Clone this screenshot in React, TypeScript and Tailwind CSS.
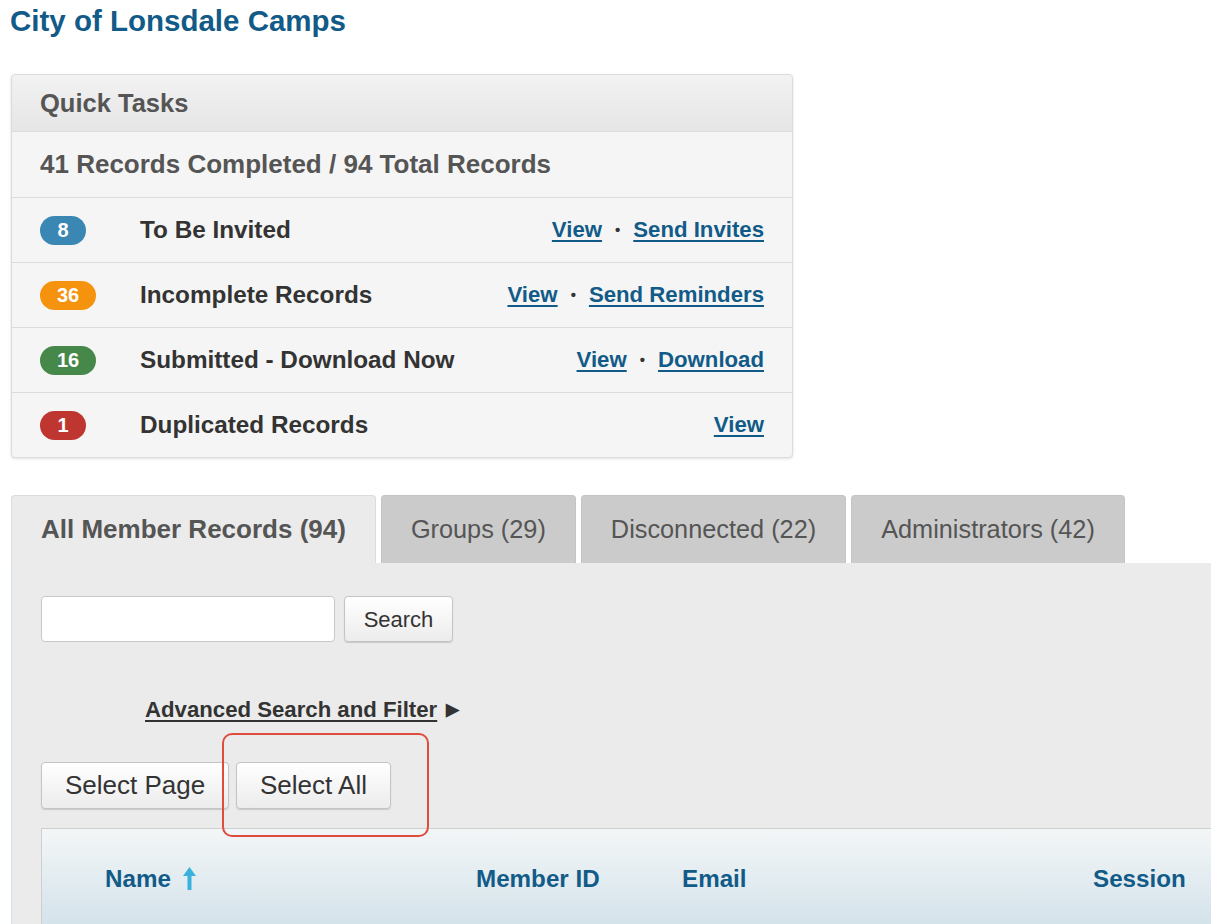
const TASKS = [
  { count: "8", color: "bg-[#3b87b4]", label: "To Be Invited", links: ["View", "Send Invites"] },
  { count: "36", color: "bg-[#f5930f]", label: "Incomplete Records", links: ["View", "Send Reminders"] },
  { count: "16", color: "bg-[#46874a]", label: "Submitted - Download Now", links: ["View", "Download"] },
  { count: "1", color: "bg-[#bf3631]", label: "Duplicated Records", links: ["View"] },
];

const TABS = [
  { label: "All Member Records (94)", active: true },
  { label: "Groups (29)", active: false },
  { label: "Disconnected (22)", active: false },
  { label: "Administrators (42)", active: false },
];

const btn =
  "rounded border border-[#c4c4c4] bg-gradient-to-b from-[#ffffff] to-[#ececec] text-[#333] shadow-[0_1px_1px_rgba(0,0,0,0.15)]";

export default function App() {
  return (
    <div className="min-h-screen bg-white overflow-hidden font-['Liberation_Sans',Arial,sans-serif] w-[1211px] h-[924px]">
      <h1 className="pl-[10px] pt-[4px] text-[29.5px] font-bold leading-[34px] text-[#125b88]">
        City of Lonsdale Camps
      </h1>

      {/* Quick tasks panel */}
      <div className="ml-[11px] mt-[36px] w-[782px] rounded border border-[#dcdcdc] bg-[#f5f5f5] shadow-[0_1px_3px_rgba(0,0,0,0.12)]">
        <div className="flex h-[56px] items-center rounded-t bg-gradient-to-b from-[#f2f2f2] to-[#e6e6e6] px-[28px] text-[25.5px] font-bold text-[#555]">
          Quick Tasks
        </div>
        <div className="flex h-[66px] items-center border-t border-[#dcdcdc] bg-[#f5f5f5] px-[28px] text-[26px] font-bold text-[#555]">
          41 Records Completed / 94 Total Records
        </div>
        {TASKS.map((t) => (
          <div
            key={t.label}
            className="flex h-[65px] items-center border-t border-[#dcdcdc] pl-[28px] pr-[28px]"
          >
            <div className="w-[100px] shrink-0">
              <span
                className={`inline-flex h-[29px] min-w-[46px] items-center justify-center rounded-full px-[17px] text-[20px] font-bold text-white ${t.color}`}
              >
                {t.count}
              </span>
            </div>
            <span className="flex-1 text-[24.3px] font-bold text-[#333]">{t.label}</span>
            <span className="flex items-center text-[22.2px] font-bold text-[#125b88]">
              {t.links.map((l, i) => (
                <span key={l} className="flex items-center">
                  {i > 0 && <span className="mx-[13px] text-[15px] text-[#333]">•</span>}
                  <a href="#" className="underline underline-offset-[3px]">
                    {l}
                  </a>
                </span>
              ))}
            </span>
          </div>
        ))}
      </div>

      {/* Tabs */}
      <div className="mt-[37px] ml-[11px] flex items-end gap-[5px]">
        {TABS.map((t) => (
          <div
            key={t.label}
            className={`flex h-[68px] items-center rounded-t border border-b-0 px-[29px] text-[#555] ${
              t.active
                ? "border-[#dcdcdc] bg-[#ebebeb] text-[26px] font-bold"
                : "border-[#c4c4c4] bg-[#cbcbcb] text-[25.3px]"
            }`}
          >
            {t.label}
          </div>
        ))}
      </div>

      {/* Tab content */}
      <div className="relative ml-[11px] border-l border-[#cfe0ea] bg-[#ebebeb] pl-[29px] pt-[33px]">
        <div className="flex items-center gap-[9px]">
          <input
            type="text"
            className="h-[46px] w-[294px] rounded border border-[#c8c8c8] bg-white"
          />
          <button className={`h-[46px] w-[109px] text-[22px] ${btn}`}>Search</button>
        </div>

        <div className="mt-[51px] ml-[104px] flex items-center text-[22.2px] font-bold text-[#333]">
          <a href="#" className="underline underline-offset-[3px]">
            Advanced Search and Filter
          </a>
          <span className="ml-[9px] text-[17px]">▶</span>
        </div>

        <div className="mt-[36px] flex gap-[7px]">
          <button className={`h-[47px] w-[188px] text-[26px] ${btn}`}>Select Page</button>
          <button className={`h-[47px] w-[155px] text-[26px] ${btn}`}>Select All</button>
        </div>

        {/* highlight annotation */}
        <div className="pointer-events-none absolute left-[210px] top-[170px] h-[104px] w-[207px] rounded-[10px] border-2 border-[#e04c3b]" />

        <div className="mt-[19px] flex h-[100px] items-center border-t border-l border-[#cfcfcf] bg-gradient-to-b from-[#f3f6f7] to-[#d3e2ea] text-[24.2px] font-bold text-[#125b88]">
          <div className="flex w-[434px] items-center pl-[63px]">
            Name
            <svg width="13" height="23" viewBox="0 0 13 23" className="ml-[12px]">
              <polygon points="6.5,0 13,9 8.5,9 8.5,23 4.5,23 4.5,9 0,9" fill="#38b2dd" />
            </svg>
          </div>
          <div className="w-[206px]">Member ID</div>
          <div className="w-[411px]">Email</div>
          <div>Session</div>
        </div>
      </div>
    </div>
  );
}
